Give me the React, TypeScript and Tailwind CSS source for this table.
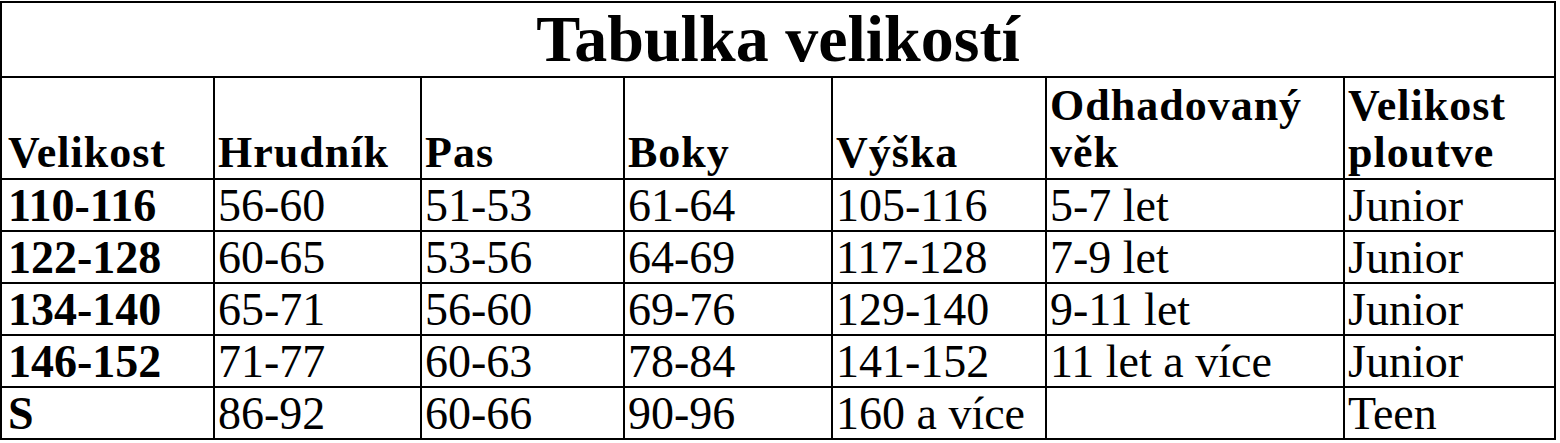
const COLUMNS = [
  { label: "Velikost", width: "w-[213px]" },
  { label: "Hrudník", width: "w-[207px]" },
  { label: "Pas", width: "w-[203px]" },
  { label: "Boky", width: "w-[208px]" },
  { label: "Výška", width: "w-[214px]" },
  { label: "Odhadovaný věk", width: "w-[298px]" },
  { label: "Velikost ploutve", width: "w-[211px]" },
];

const ROWS = [
  ["110-116", "56-60", "51-53", "61-64", "105-116", "5-7 let", "Junior"],
  ["122-128", "60-65", "53-56", "64-69", "117-128", "7-9 let", "Junior"],
  ["134-140", "65-71", "56-60", "69-76", "129-140", "9-11 let", "Junior"],
  ["146-152", "71-77", "60-63", "78-84", "141-152", "11 let a více", "Junior"],
  ["S", "86-92", "60-66", "90-96", "160 a více", "", "Teen"],
];

export default function App() {
  return (
    <div className="w-[1560px] h-[443px] bg-white pt-px overflow-hidden font-['Liberation_Serif',serif] text-black">
      <table className="table-fixed border-collapse w-[1556px]">
        <colgroup>
          {COLUMNS.map((col) => (
            <col key={col.label} className={col.width} />
          ))}
        </colgroup>
        <thead>
          <tr className="h-[74px]">
            <th
              colSpan={7}
              className="border-2 border-black text-center align-bottom p-0 text-[66px] leading-[1.1] font-bold"
            >
              Tabulka velikostí
            </th>
          </tr>
          <tr className="h-[102px]">
            {COLUMNS.map((col, i) => (
              <th
                key={col.label}
                className={`border-2 border-black text-left align-bottom pb-[2px] ${
                  i === 0 ? "pl-[6px]" : "pl-[3px]"
                } pr-0 text-[44px] leading-[47px] font-bold tracking-[1px]`}
              >
                {col.label}
              </th>
            ))}
          </tr>
        </thead>
        <tbody>
          {ROWS.map((row) => (
            <tr key={row[0]} className="h-[52px]">
              {row.map((cell, i) => (
                <td
                  key={i}
                  className={`border-2 border-black align-bottom pt-0 pb-[1px] ${
                    i === 0 ? "pl-[6px] font-bold" : "pl-[3px]"
                  } text-[46px] leading-[47px] whitespace-nowrap`}
                >
                  {cell}
                </td>
              ))}
            </tr>
          ))}
        </tbody>
      </table>
    </div>
  );
}
